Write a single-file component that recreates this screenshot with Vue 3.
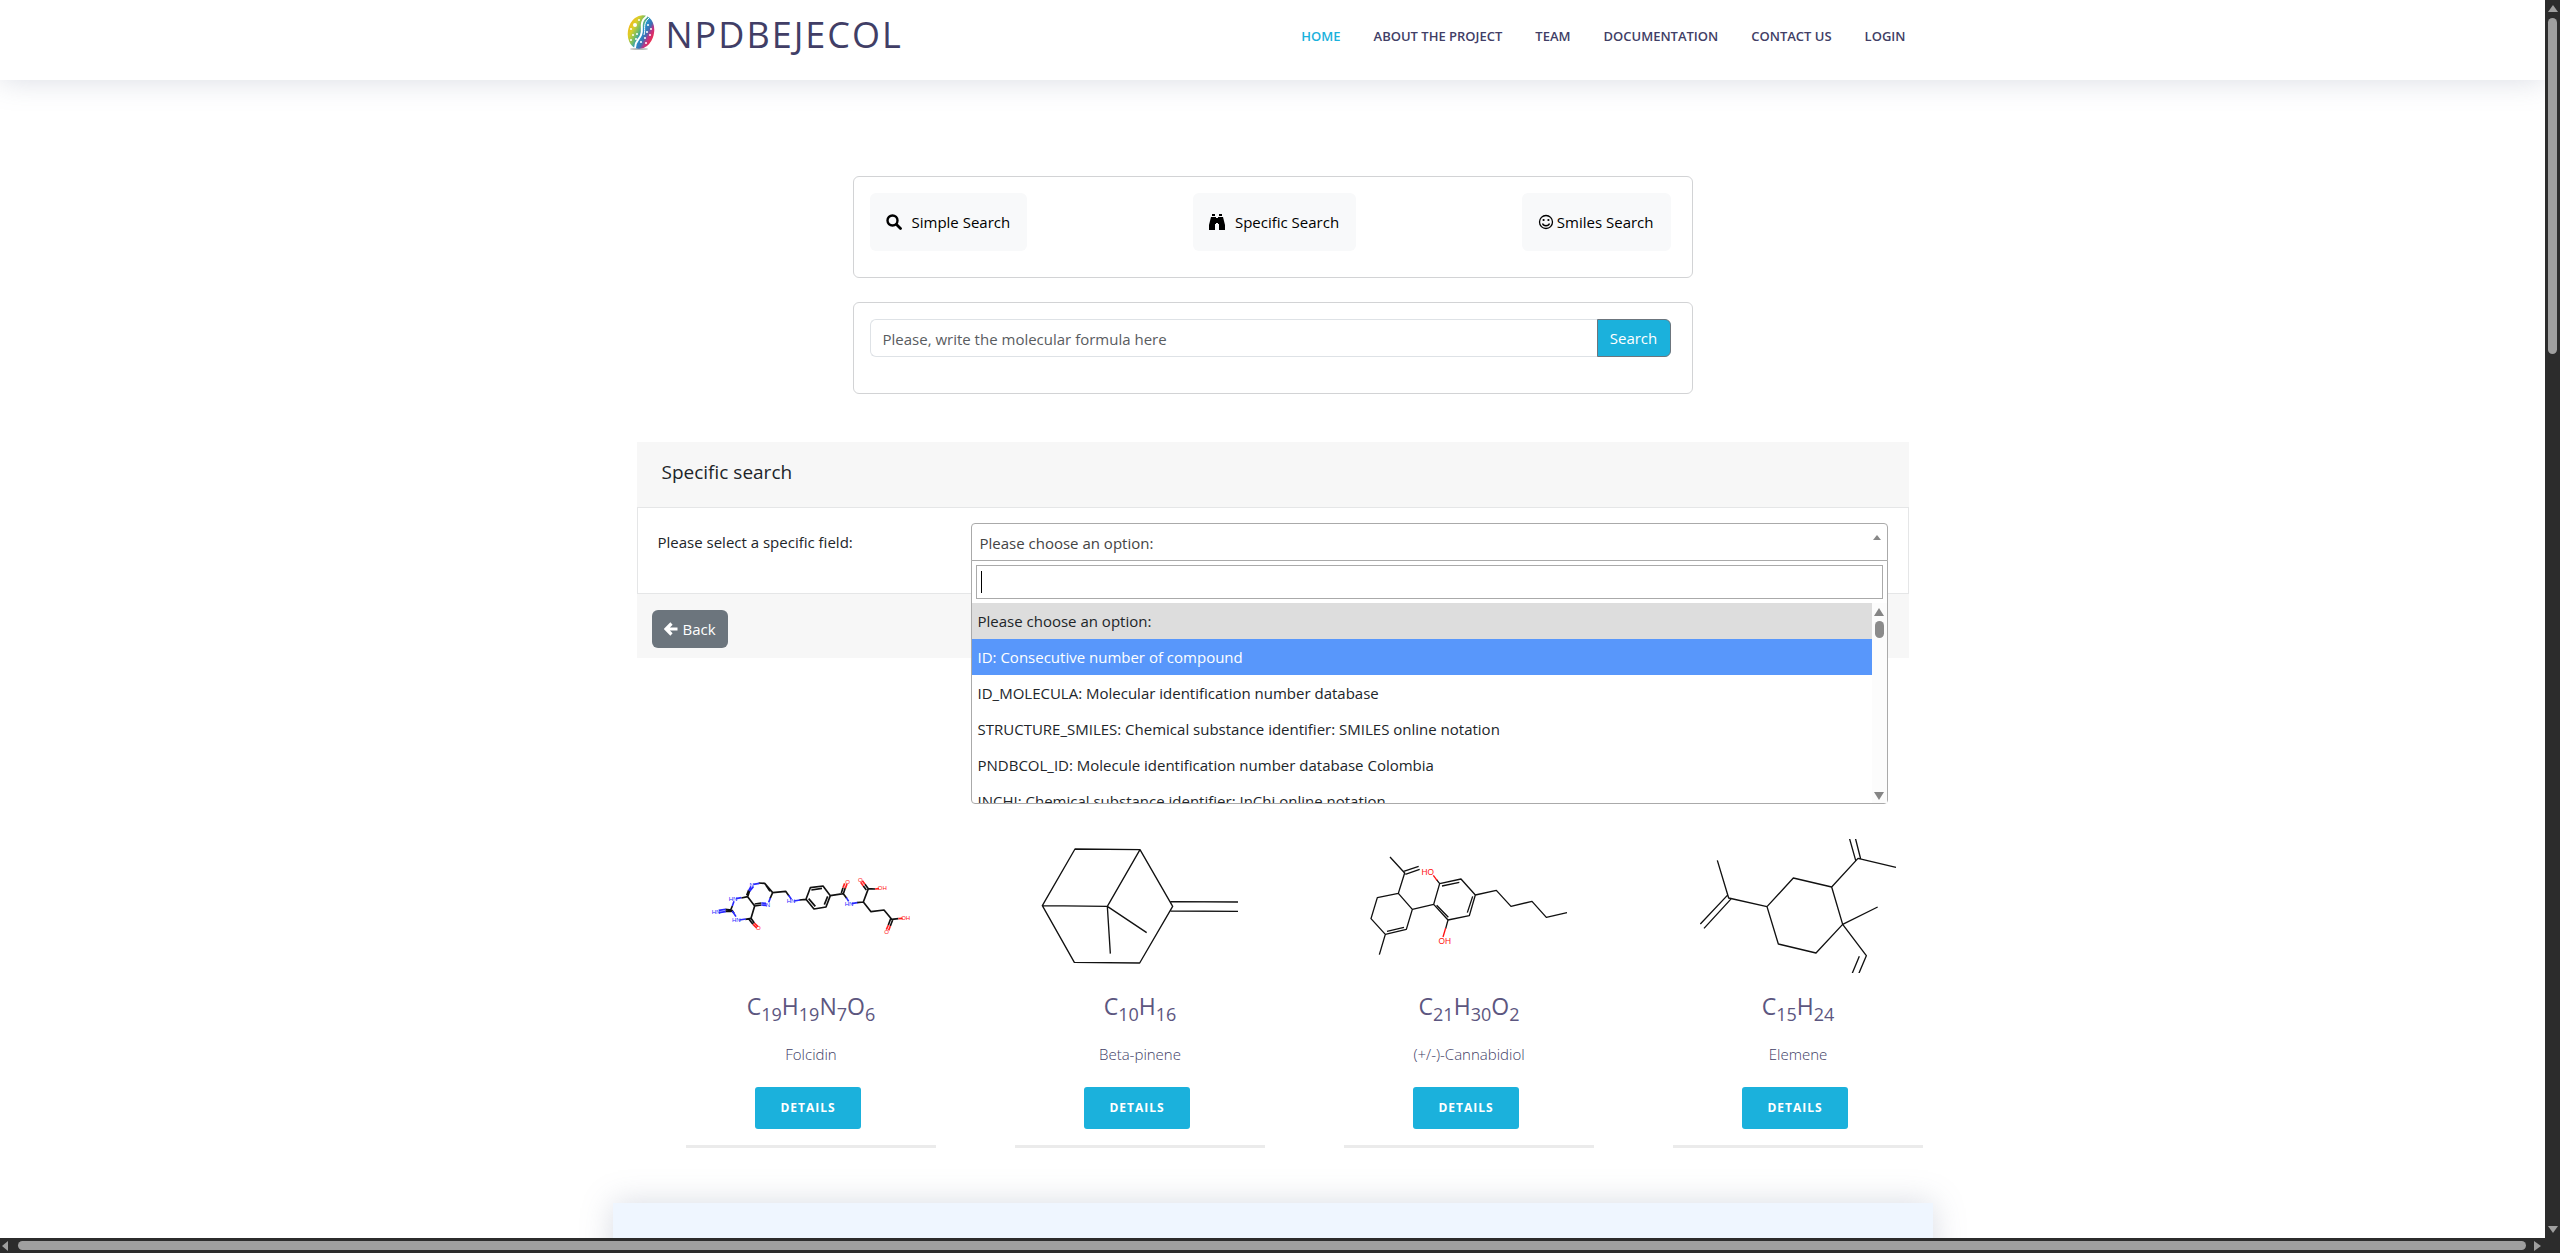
<script setup>
import { ref } from 'vue'

const nav = ['Home', 'About the project', 'Team', 'Documentation', 'Contact us', 'Login']
const field = ref('Please choose an option:')
const options = [
  'Please choose an option:',
  'ID: Consecutive number of compound',
  'ID_MOLECULA: Molecular identification number database',
  'STRUCTURE_SMILES: Chemical substance identifier: SMILES online notation',
  'PNDBCOL_ID: Molecule identification number database Colombia',
  'INCHI: Chemical substance identifier: InChi online notation',
]

const compounds = [
  {
    name: 'Folcidin',
    formula: [['C', 19], ['H', 19], ['N', 7], ['O', 6]],
    box: '93 57 600 402',
    width: 5,
    size: 18,
    strokes: [
      { c: '#111', d: 'M184 234L203 230M209 212L203 230L224 258L213 295L196 298M200 226L206 210M155 270L162 280M152 270L157 258M236 189L254 190L278 218L270 236M258 196L270 214M224 258L244 255M224 252L244 249M278 218L317 214L327 228M358 240L378 238L391 203L429 198L451 227L438 261L402 267L378 238M394 210L426 205M443 229L433 254M406 259L386 236M451 227L490 221L496 203M484 219L489 203M490 221L500 235M531 248L550 246L565 206L585 207M565 206L555 193M559 210L550 198M550 246L573 275L612 270L635 298L655 296M632 296L625 315M638 300L631 318M136 268L155 270M136 274L155 274M213 295L223 309M208 299L219 313' },
      { c: '#2a2aff', d: 'M220 200L209 214M213 199L206 212M220 193L238 190M168 236L184 233M157 258L162 244M116 271L137 268M116 278L137 275M157 273L168 290M178 300L197 297M244 255L260 256M244 249L258 250M266 247L271 234M326 226L334 238M342 243L360 240M499 233L506 244M515 251L532 248' },
      { c: '#f22', d: 'M496 205L501 192M489 203L494 190M555 193L547 182M550 198L542 187M585 207L597 206M655 296L668 295M625 315L619 329M631 318L626 331M223 309L234 320M219 313L230 324' },
    ],
    labels: [
      ['N', 215, 195, 'b'], ['HN', 159, 236, 'b'], ['HN', 108, 277, 'b'], ['HN', 169, 301, 'b'], ['N', 264, 254, 'b'],
      ['HN', 333, 243, 'b'], ['HN', 507, 251, 'b'], ['O', 503, 187, 'r'], ['O', 541, 181, 'r'], ['OH', 607, 205, 'r'],
      ['OH', 677, 294, 'r'], ['O', 620, 336, 'r'], ['O', 235, 324, 'r'],
    ],
  },
  {
    name: 'Beta-pinene',
    formula: [['C', 10], ['H', 16]],
    box: '90 57 600 402',
    width: 4,
    size: 20,
    strokes: [{ c: '#111', d: 'M195 87L390 89L488 259L389 429L193 427L97 257ZM97 257L292 259L390 89M292 259L301 401M292 259L410 338M482 245L684 246M482 273L684 274' }],
    labels: [],
  },
  {
    name: '(+/-)-Cannabidiol',
    formula: [['C', 21], ['H', 30], ['O', 2]],
    box: '87 57 600 402',
    width: 4,
    size: 25,
    strokes: [
      { c: '#111', d: 'M150 111L194 159L175 220L112 233L93 296L136 343L199 328L217 268L175 220M191 154L236 139M196 163L239 148M136 343L118 404M141 334L192 322M217 268L281 253L299 191L363 177L406 225L388 287L324 300L281 253M306 198L358 187M398 229L382 278M290 256L325 292M299 191L289 178M324 300L317 326M406 225L469 211L513 259L576 244L619 292L681 278' },
      { c: '#f11', d: 'M291 181L280 166M317 324L309 351' },
    ],
    labels: [['HO', 263, 155, 'r'], ['OH', 314, 363, 'r']],
  },
  {
    name: 'Elemene',
    formula: [['C', 15], ['H', 24]],
    box: '84 57 600 402',
    width: 4,
    size: 20,
    strokes: [{ c: '#111', d: 'M142 121L176 234L291 260L370 174L485 201L518 313L438 399L325 372L291 260M172 226L91 312M184 236L102 325M485 201L564 115L678 142M557 121L537 50M572 117L555 50M518 313L623 261M518 313L589 407L565 464M568 409L545 464' }],
    labels: [],
  },
]
</script>

<template>
  <div class="window">
    <div class="viewport">
      <header class="header">
        <div class="container header-row">
          <a class="brand" href="#">
            <svg class="brand-mark" viewBox="0 0 30 36" aria-hidden="true">
              <defs>
                <linearGradient id="bean" x1="0" y1="0.3" x2="1" y2="0.6">
                  <stop offset="0" stop-color="#f4b81c" />
                  <stop offset="0.2" stop-color="#d8cf2a" />
                  <stop offset="0.42" stop-color="#6cba6c" />
                  <stop offset="0.55" stop-color="#2593cb" />
                  <stop offset="0.72" stop-color="#3f6fb3" />
                  <stop offset="0.84" stop-color="#c23183" />
                  <stop offset="1" stop-color="#ee2d4b" />
                </linearGradient>
              </defs>
              <ellipse cx="13" cy="34" rx="9" ry="1" fill="#bbb" />
              <ellipse cx="15" cy="17" rx="13" ry="17" transform="rotate(14 15 17)" fill="url(#bean)" />
              <path d="M21 1C12 8 18 14 15 20C13 25 9 26 9 33" fill="none" stroke="#fff" stroke-width="2" />
              <path d="M23 3C16 9 20 14 18 20" fill="none" stroke="#fff" stroke-width="1" />
              <g fill="#fff">
                <circle cx="9" cy="10" r="2" /><circle cx="13" cy="5" r="1" /><circle cx="5" cy="14" r="1" />
                <circle cx="7" cy="20" r="1" /><circle cx="11" cy="19" r="1" /><circle cx="5" cy="25" r="1" />
                <circle cx="10" cy="24" r="1" /><circle cx="22" cy="10" r="1" /><circle cx="25" cy="14" r="1" />
                <circle cx="21" cy="17" r="1" /><circle cx="24" cy="20" r="1" /><circle cx="19" cy="23" r="1" />
                <circle cx="15" cy="27" r="1" /><circle cx="20" cy="28" r="1" />
              </g>
            </svg>
            <span>NPDBEJECOL</span>
          </a>
          <nav class="nav">
            <a v-for="(item, i) in nav" :key="item" href="#" :class="{ active: i === 0 }">{{ item }}</a>
          </nav>
        </div>
      </header>

      <main>
        <section class="searches">
          <div class="box modes">
            <button type="button" class="mode">
              <svg class="glyph" viewBox="0 0 16 16" aria-hidden="true"><circle cx="6.500" cy="6.500" r="5" fill="none" stroke="#000" stroke-width="2.400" /><path d="M10.500 10.500L14.500 14.500" stroke="#000" stroke-width="2.800" stroke-linecap="round" /></svg>
              Simple Search
            </button>
            <button type="button" class="mode">
              <svg class="glyph" viewBox="0 0 16 16" aria-hidden="true"><path d="M3 0h3v2H3zM10 0h3v2h-3zM2 3h5v7H6v6H0v-5zM9 3h5l2 8v5h-6v-6H9zM7 4h2v5H7z" fill="#000" /></svg>
              Specific Search
            </button>
            <button type="button" class="mode smiles">
              <svg class="glyph" viewBox="0 0 16 16" aria-hidden="true"><circle cx="8" cy="8" r="6.500" fill="none" stroke="#000" stroke-width="1.300" /><circle cx="5.600" cy="6" r="1.100" /><circle cx="10.400" cy="6" r="1.100" /><path d="M4.500 9.500C5.500 12.500 10.500 12.500 11.500 9.500" fill="none" stroke="#000" stroke-width="1.300" /></svg>
              Smiles Search
            </button>
          </div>
          <form class="box formula" @submit.prevent>
            <input type="text" aria-label="Molecular formula" placeholder="Please, write the molecular formula here" />
            <button type="submit">Search</button>
          </form>
        </section>

        <section class="panel">
          <h2>Specific search</h2>
          <div class="panel-body">
            <label for="field">Please select a specific field:</label>
            <div class="picker">
              <select id="field" v-model="field">
                <option v-for="o in options" :key="o">{{ o }}</option>
              </select>
              <span class="picker-arrow"></span>
              <div class="dropdown">
                <div class="filter"><span class="caret"></span><input type="text" aria-label="Filter fields" /></div>
                <div class="list">
                  <ul role="listbox" aria-label="Fields">
                    <li v-for="(o, i) in options" :key="o" role="option" :aria-selected="i === 0" :class="{ chosen: i === 0, hover: i === 1 }">{{ o }}</li>
                  </ul>
                  <div class="list-bar"><i class="up"></i><i class="thumb"></i><i class="down"></i></div>
                </div>
              </div>
            </div>
          </div>
          <div class="panel-foot">
            <button type="button" class="back">
              <svg viewBox="0 0 14 14" aria-hidden="true"><path d="M7.500 1.500L2 7L7.500 12.500M3 7H13.500" fill="none" stroke="#fff" stroke-width="3.200" /></svg>
              Back
            </button>
          </div>
        </section>

        <section class="cards">
          <article v-for="c in compounds" :key="c.name" class="card">
            <svg class="molecule" :viewBox="c.box" role="img" :aria-label="c.name">
              <path v-for="s in c.strokes" :key="s.c" :d="s.d" :stroke="s.c" :stroke-width="c.width" fill="none" stroke-linejoin="round" />
              <text v-for="(l, i) in c.labels" :key="i" :x="l[1]" :y="l[2]" :class="l[3]" :font-size="c.size">{{ l[0] }}</text>
            </svg>
            <h3><template v-for="p in c.formula" :key="p[0]">{{ p[0] }}<sub>{{ p[1] }}</sub></template></h3>
            <p>{{ c.name }}</p>
            <a class="details" href="#">Details</a>
          </article>
        </section>

        <section class="container band"></section>
      </main>
    </div>
    <div class="bar bar-y"><i class="tri up"></i><i class="thumb-y"></i><i class="tri down"></i></div>
    <div class="bar bar-x"><i class="tri left"></i><i class="thumb-x"></i><i class="tri right"></i></div>
    <div class="corner"></div>
  </div>
</template>

<style>
body { margin: 0; overflow: hidden; }
</style>

<style scoped>
* { box-sizing: border-box; }
.window {
  height: 100vh;
  display: grid;
  grid-template: minmax(0, 1fr) 15px / minmax(0, 1fr) 15px;
  background: #fff;
  color: #212529;
  font: 15px/24px "Open Sans", "Noto Sans", sans-serif;
}
.viewport { overflow: hidden; }
button, input, select { font: inherit; margin: 0; }
a { text-decoration: none; }
.container { max-width: 1320px; margin: 0 auto; }

.header { height: 80px; box-shadow: 0 0 30px rgba(127, 137, 161, 0.3); }
.header-row { display: flex; justify-content: space-between; padding: 0 27px 0 13px; }
.brand {
  display: flex;
  align-items: flex-start;
  gap: 10px;
  color: #413e66;
  font-size: 36px;
  line-height: 40px;
  letter-spacing: 2px;
  padding-top: 15px;
}
.brand-mark { width: 30px; height: 36px; }
.nav { display: flex; gap: 33px; padding-top: 24px; }
.nav a { color: #413e66; font-size: 13px; font-weight: 600; text-transform: uppercase; }
.nav a.active { color: #1bb1dc; }

.searches { display: flex; flex-direction: column; gap: 24px; max-width: 840px; margin: 96px auto 0; }
.box { border: 1px solid #d2d3d5; border-radius: 6px; display: flex; }
.modes { justify-content: space-between; padding: 16px 21px 26px 16px; }
.mode {
  display: flex;
  align-items: center;
  gap: 10px;
  height: 58px;
  padding: 0 17px 0 16px;
  border: 0;
  border-radius: 6px;
  background: #f8f9fa;
  color: #000;
}
.smiles { gap: 3px; }
.glyph { width: 16px; height: 16px; }
.formula { padding: 16px 21px 36px 16px; }
.formula input {
  flex: 1;
  height: 38px;
  padding: 2px 12px 0;
  border: 1px solid #dee2e6;
  border-right: 0;
  border-radius: 6px 0 0 6px;
  outline: 0;
}
.formula input::placeholder { color: #595c5f; opacity: 1; }
.formula button {
  width: 74px;
  padding: 0;
  border: 1px solid #6c757d;
  border-radius: 0 6px 6px 0;
  background: #1bb1dc;
  color: #fff;
}

.panel { max-width: 1272px; margin: 48px auto 0; background: #f7f7f7; }
.panel h2 { margin: 0; padding: 18px 25px 23px; font-size: 19px; font-weight: 400; line-height: 24px; }
.panel-body {
  display: flex;
  align-items: flex-start;
  justify-content: space-between;
  padding: 15px 20px 31px;
  border: 1px solid #e5e6e7;
  background: #fff;
}
.panel-body label { padding-top: 7px; }
.picker { position: relative; width: 917px; height: 39px; }
.picker select {
  width: 100%;
  height: 38px;
  padding: 1px 8px 0;
  border: 1px solid #aaa;
  border-radius: 4px 4px 0 0;
  background: #fff;
  color: #444;
  appearance: none;
}
.picker-arrow {
  position: absolute;
  top: 12px;
  right: 7px;
  border: 4px solid transparent;
  border-top: 0;
  border-bottom: 5px solid #888;
}
.dropdown {
  position: absolute;
  top: 37px;
  left: 0;
  right: 0;
  border: 1px solid #aaa;
  border-radius: 0 0 4px 4px;
  background: #fff;
}
.filter { position: relative; padding: 4px; }
.filter input { display: block; width: 100%; height: 34px; padding: 4px; border: 1px solid #aaa; outline: 0; }
.caret { position: absolute; left: 9px; top: 10px; width: 1px; height: 22px; background: #000; }
.list { display: flex; height: 200px; overflow: hidden; }
.list ul { flex: 1; margin: 0; padding: 0; list-style: none; }
.list li { padding: 6px; }
.chosen { background: #ddd; }
.hover { background: #5897fb; color: #fff; }
.list-bar { display: flex; flex-direction: column; align-items: center; width: 15px; padding: 5px 0 3px; background: #fcfcfc; }
.list-bar i, .tri { border: 5px solid transparent; }
.list-bar .up { border-top: 0; border-bottom: 8px solid #858585; }
.list-bar .down { border-bottom: 0; border-top: 8px solid #858585; margin-top: auto; }
.list-bar .thumb { width: 9px; height: 17px; margin-top: 5px; border: 0; border-radius: 5px; background: #8b8b8b; }
.panel-foot { padding: 16px 15px 10px; }
.back {
  display: flex;
  align-items: center;
  gap: 5px;
  height: 38px;
  padding: 0 12px;
  border: 0;
  border-radius: 6px;
  background: #6c757d;
  color: #fff;
}
.back svg { width: 14px; height: 14px; }

.cards { display: flex; justify-content: space-between; max-width: 1301px; margin: 157px auto 0; padding-left: 64px; }
.card { display: flex; flex-direction: column; align-items: center; width: 250px; padding: 24px 0 16px; border-bottom: 3px solid #ebebeb; color: #5c5680; }
.molecule { width: 200px; height: 134px; }
.molecule text { text-anchor: middle; dominant-baseline: central; font-family: "Liberation Sans", sans-serif; }
.b { fill: #2a2aff; }
.r { fill: #f11; }
.card h3 { margin: 17px 0 0; font-size: 23px; font-weight: 400; line-height: 32px; }
.card sub { font-size: 18px; line-height: 0; }
.card p { margin: 20px 0 21px; font-weight: 300; color: #413e66; }
.details {
  width: 106px;
  margin-right: 6px;
  border-radius: 3px;
  background: #1bb1dc;
  color: #fff;
  font-size: 12px;
  font-weight: 700;
  line-height: 42px;
  letter-spacing: 1px;
  text-align: center;
  text-transform: uppercase;
}
.band { height: 300px; margin-top: 55px; background: #eff6ff; box-shadow: 0 0 30px rgba(127, 137, 161, 0.3); }

.bar, .corner { background: #2c2c2c; display: flex; align-items: center; }
.bar-y { flex-direction: column; padding: 5px 0; }
.bar-x { grid-row: 2; padding: 0 4px 0 2px; }
.tri.up { border-top: 0; border-bottom: 7px solid #9f9f9f; }
.tri.down { border-bottom: 0; border-top: 7px solid #9f9f9f; margin-top: auto; }
.tri.left { border-left: 0; border-right: 6px solid #9f9f9f; }
.tri.right { border-right: 0; border-left: 7px solid #9f9f9f; margin-left: auto; }
.thumb-y { width: 9px; height: 336px; margin-top: 6px; border-radius: 5px; background: #9f9f9f; }
.thumb-x { flex: 1; height: 9px; margin: 0 8px 0 10px; border-radius: 5px; background: #9f9f9f; }
</style>
